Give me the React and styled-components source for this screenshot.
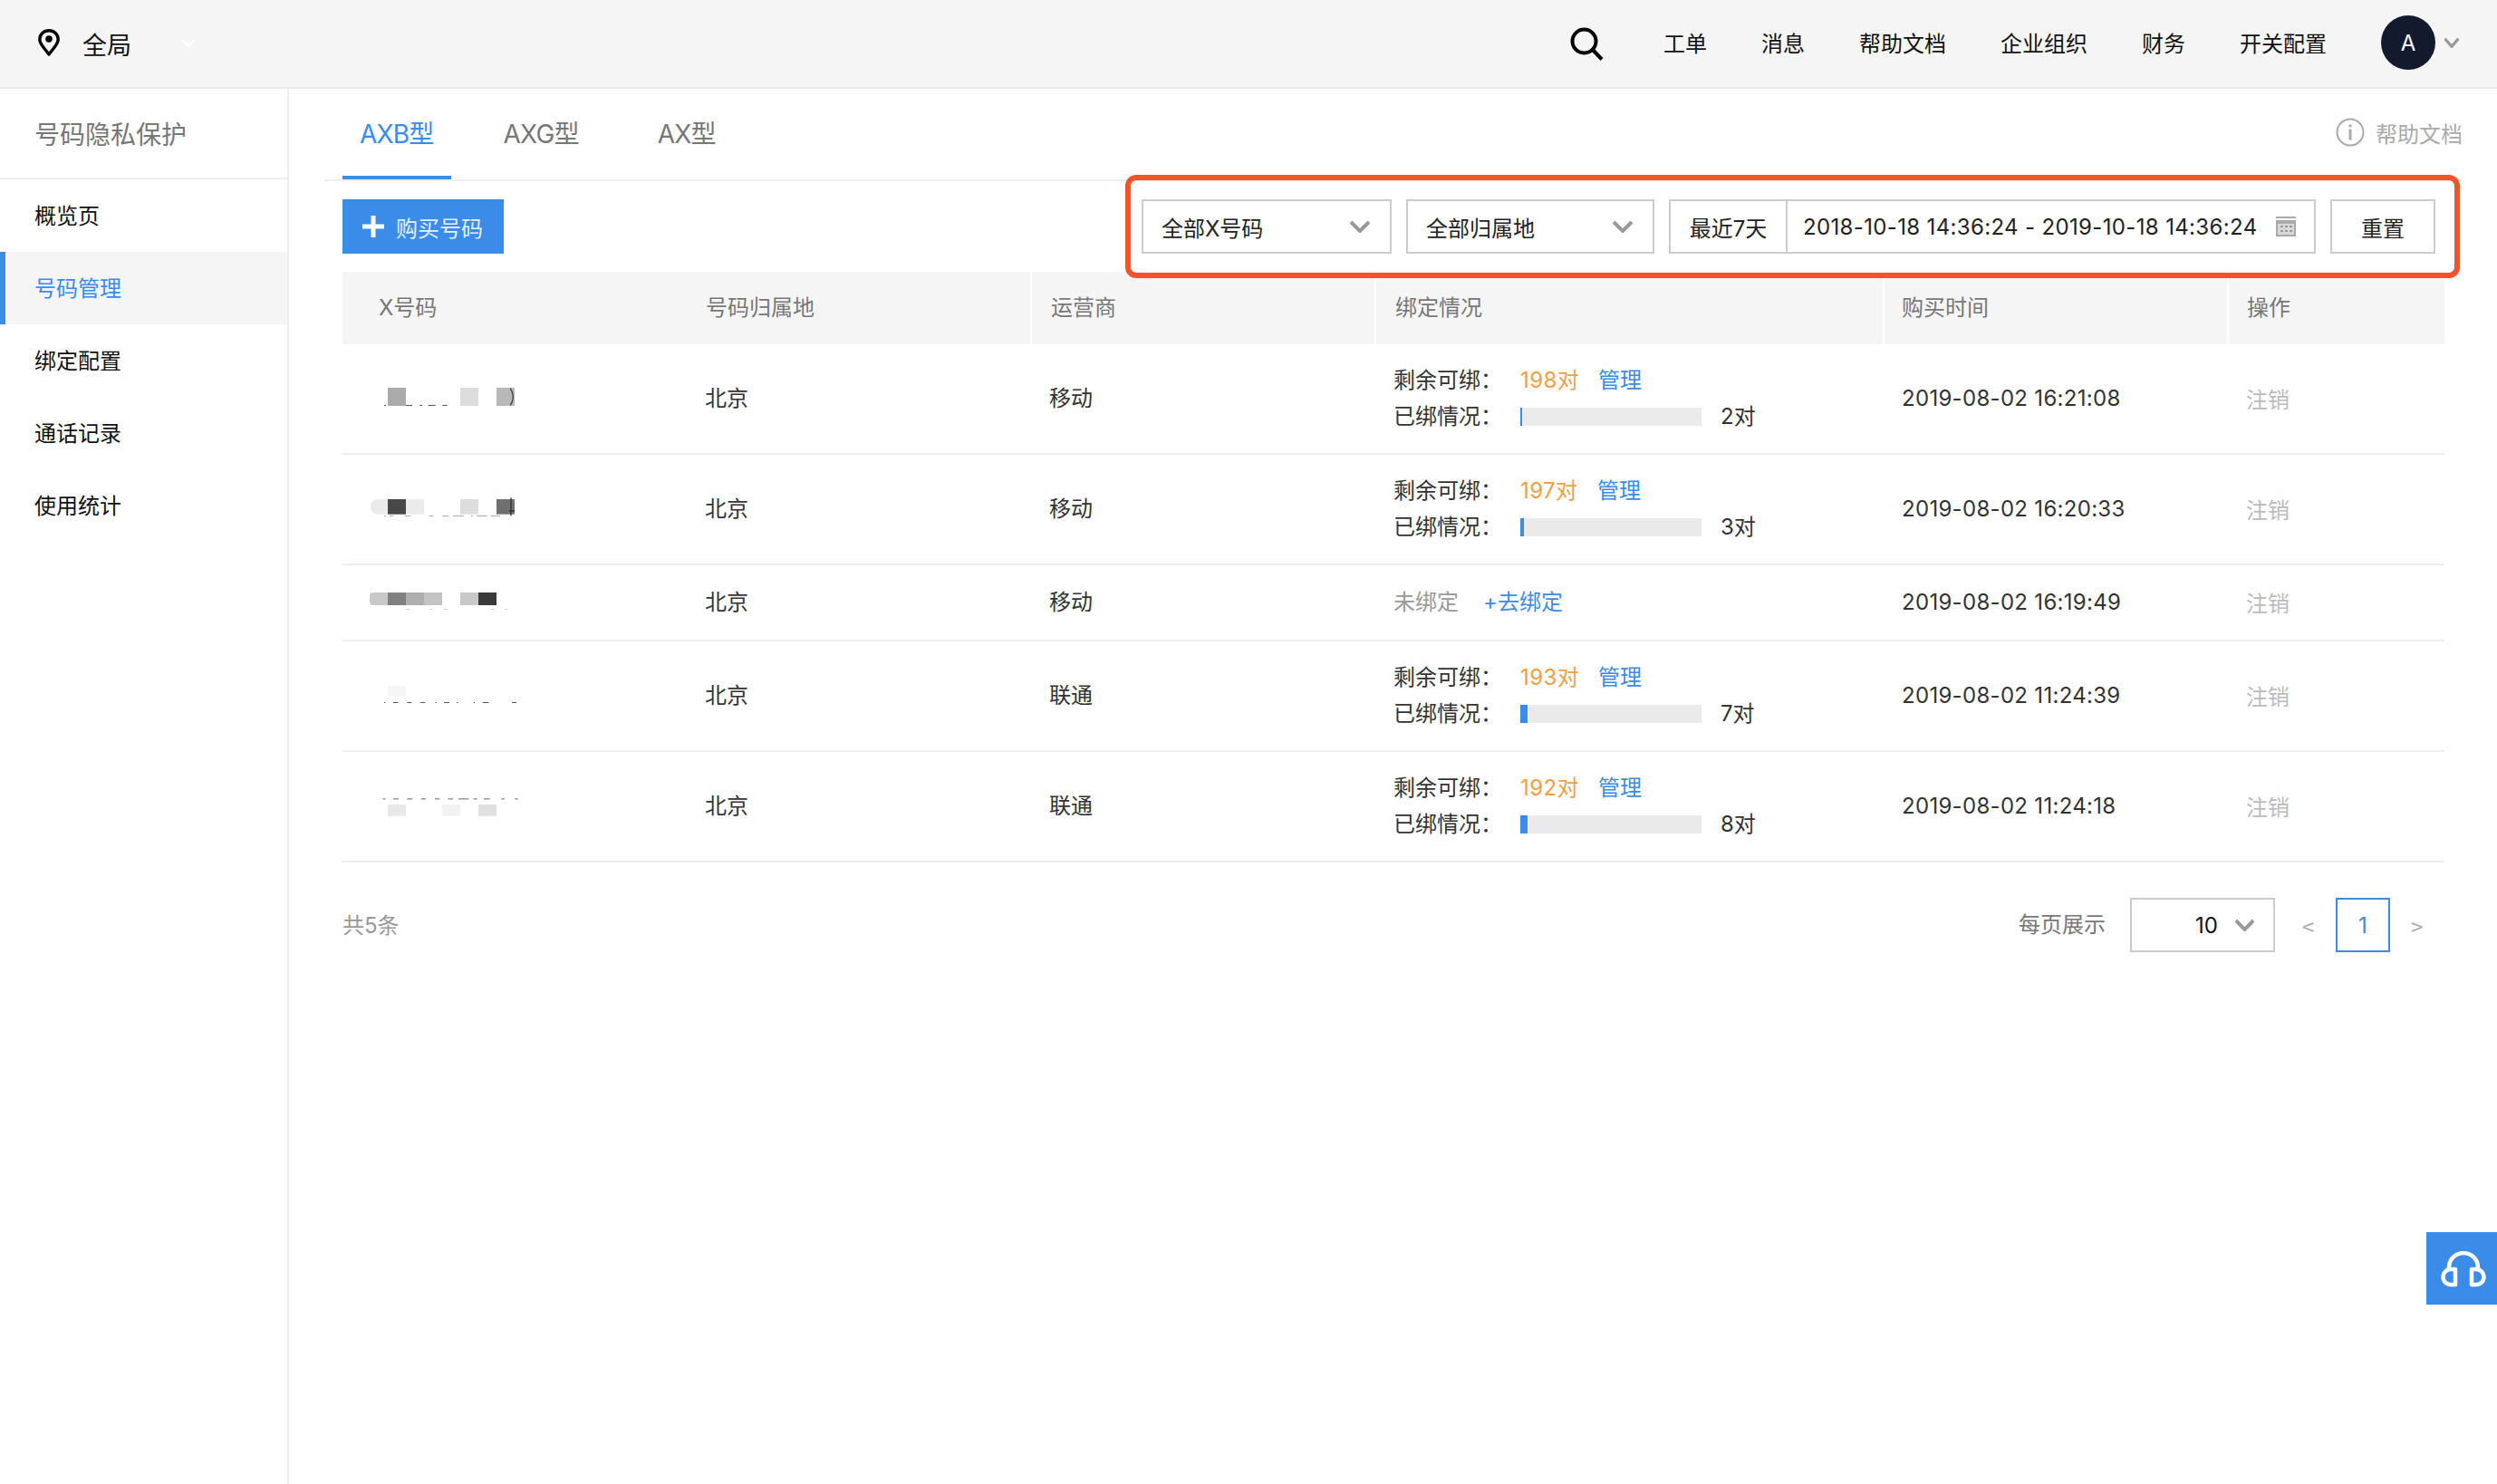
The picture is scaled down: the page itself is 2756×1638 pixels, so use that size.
import React from 'react';
import styled, { createGlobalStyle } from 'styled-components';

const BLUE = '#3a8ce8';

const GlobalStyle = createGlobalStyle`
    html, body {
        margin: 0;
        padding: 0;
        height: 100%;
        background-color: #fff;
    }
    #root {
        height: 100%;
    }
    * {
        box-sizing: border-box;
    }
    body {
        font-family: Inter, "Noto Sans CJK SC", sans-serif;
        font-size: 24px;
        color: #333;
    }
`;

const Page = styled.div`
    position: relative;
    display: flex;
    flex-direction: column;
    height: 1638px;
    overflow: hidden;
`;

const Header = styled.header`
    display: flex;
    flex: none;
    justify-content: space-between;
    align-items: center;
    height: 98px;
    padding: 0 41px 2px 42px;
    background-color: #f5f5f5;
    border-bottom: 2px solid #e9ecef;
`;

const Region = styled.div`
    display: flex;
    align-items: center;
    color: #111;
    font-size: 27px;
    & span {
        margin: 2px 55px 0 25px;
    }
`;

const TopNav = styled.nav`
    display: flex;
    align-items: center;
    gap: 60px;
    color: #111;
`;

const NavItem = styled.a`
    padding-top: 3px;
    line-height: 34px;
`;

const SearchBtn = styled.button`
    display: flex;
    margin-right: 6px;
    padding: 2px 0 0;
    border: 0;
    background: none;
`;

const UserArea = styled.div`
    display: flex;
    align-items: center;
    gap: 9px;
`;

const Avatar = styled.div`
    display: flex;
    justify-content: center;
    align-items: center;
    width: 60px;
    height: 60px;
    border-radius: 50%;
    background-color: #141a2e;
    color: #fff;
`;

const Body = styled.div`
    display: flex;
    flex: 1;
    min-height: 0;
`;

const Sidebar = styled.aside`
    flex: none;
    width: 319px;
    border-right: 2px solid #eee;
`;

const SideTitle = styled.h2`
    display: flex;
    align-items: center;
    height: 100px;
    margin: 0;
    padding-left: 38px;
    border-bottom: 2px solid #eee;
    font-size: 28px;
    font-weight: 400;
    color: #777;
`;

const SideItem = styled.a`
    display: flex;
    align-items: center;
    height: 80px;
    padding-bottom: 4px;
    padding-left: ${(p) => (p.$active ? '32px' : '38px')};
    border-left: ${(p) => (p.$active ? `6px solid ${BLUE}` : '0')};
    background-color: ${(p) => (p.$active ? '#f5f5f5' : 'transparent')};
    color: ${(p) => (p.$active ? BLUE : '#111')};
`;

const Main = styled.main`
    flex: 1;
    min-width: 0;
    padding: 0 38px 0 39px;
`;

const TabBar = styled.div`
    display: flex;
    justify-content: space-between;
    height: 102px;
    padding-left: 20px;
    border-bottom: 2px solid #eee;
`;

const Tabs = styled.div`
    display: flex;
`;

const Tab = styled.a`
    display: flex;
    align-items: center;
    height: 100px;
    margin-right: ${(p) => p.$gap}px;
    padding: 0 19px;
    border-bottom: 4px solid ${(p) => (p.$active ? BLUE : 'transparent')};
    font-size: 28px;
    letter-spacing: -0.8px;
    color: ${(p) => (p.$active ? BLUE : '#777')};
`;

const HelpLink = styled.a`
    display: flex;
    align-items: center;
    gap: 12px;
    height: 100px;
    padding-bottom: 4px;
    color: #aaa;
`;

const Content = styled.div`
    padding: 20px 20px 0;
`;

const Toolbar = styled.div`
    display: flex;
    justify-content: space-between;
    height: 60px;
`;

const BuyButton = styled.button`
    display: flex;
    align-items: center;
    gap: 13px;
    width: 178px;
    height: 60px;
    padding: 0 0 0 22px;
    border: 0;
    background-color: ${BLUE};
    color: #e4efff;
    font-family: inherit;
    font-size: 24px;
`;

const Filters = styled.div`
    display: flex;
    gap: 16px;
    margin-right: 10px;
`;

const Select = styled.div`
    display: flex;
    justify-content: space-between;
    align-items: center;
    width: ${(p) => p.$width}px;
    height: 60px;
    padding: 0 21px 0 20px;
    border: 2px solid #ccc;
    color: #222;
`;

const DateGroup = styled.div`
    display: flex;
    align-items: center;
    width: 714px;
    height: 60px;
    border: 2px solid #ccc;
    color: #222;
`;

const DatePreset = styled.div`
    display: flex;
    justify-content: center;
    align-items: center;
    flex: none;
    width: 129px;
    height: 100%;
    border-right: 2px solid #ccc;
`;

const DateRange = styled.div`
    display: flex;
    flex: 1;
    justify-content: space-between;
    align-items: center;
    padding: 0 20px 0 17px;
    letter-spacing: 0.35px;
`;

const ResetButton = styled.button`
    width: 116px;
    height: 60px;
    padding: 0;
    border: 2px solid #ccc;
    background-color: #fff;
    color: #222;
    font-family: inherit;
    font-size: 24px;
`;

const Highlight = styled.div`
    position: absolute;
    top: 193px;
    left: 1242px;
    width: 1473px;
    height: 114px;
    border: 6px solid #f4522a;
    border-radius: 12px;
    pointer-events: none;
`;

const COLUMNS = '361px 400px 380px 561px 380px 238px';

const TableHead = styled.div`
    display: grid;
    grid-template-columns: ${COLUMNS};
    height: 80px;
    margin-top: 20px;
    background-color: #f5f5f5;
    color: #777;
`;

const HeadCell = styled.div`
    display: flex;
    align-items: center;
    padding-bottom: 5px;
    padding-left: ${(p) => p.$pad}px;
    border-right: ${(p) => (p.$split ? '2px solid #fff' : '0')};
`;

const Row = styled.div`
    display: grid;
    grid-template-columns: ${COLUMNS};
    height: ${(p) => (p.$tall ? 122 : 84)}px;
    border-bottom: 2px solid #eee;
`;

const Cell = styled.div`
    display: flex;
    align-items: center;
    padding-left: ${(p) => p.$pad}px;
    color: #333;
`;

const TextCell = styled(Cell)`
    padding-bottom: 5px;
`;

const TimeCell = styled(Cell)`
    padding-bottom: 2px;
    letter-spacing: 0.3px;
`;

const CancelCell = styled(Cell)`
    padding-bottom: 1px;
    color: #bbb;
`;

const BindBlock = styled.div`
    display: grid;
    grid-template-columns: 140px auto;
    grid-auto-rows: 40px;
    align-items: center;
`;

const BindValue = styled.div`
    display: flex;
    align-items: center;
`;

const BindText = styled.span`
    padding-bottom: 5px;
`;

const Remain = styled(BindText)`
    width: ${(p) => p.$width || 86}px;
    letter-spacing: 0.4px;
    color: #f0a040;
`;

const TextLink = styled(BindText)`
    color: ${BLUE};
`;

const Unbound = styled(BindText)`
    width: 99px;
    color: #999;
`;

const Bar = styled.div`
    width: 200px;
    height: 20px;
    margin-right: 21px;
    background-color: #eaeaea;
`;

const BarFill = styled.div`
    height: 100%;
    background-color: ${BLUE};
`;

const Footer = styled.div`
    display: flex;
    justify-content: space-between;
    align-items: center;
    height: 60px;
    margin-top: 39px;
    padding-right: 24px;
`;

const Total = styled.span`
    padding-bottom: 3px;
    color: #999;
`;

const Pager = styled.div`
    display: flex;
    align-items: center;
`;

const PagerLabel = styled.span`
    margin-right: 27px;
    padding-bottom: 5px;
    color: #777;
`;

const SizeSelect = styled.div`
    display: flex;
    justify-content: flex-end;
    align-items: center;
    gap: 18px;
    width: 160px;
    height: 60px;
    margin-right: 30px;
    padding-right: 20px;
    border: 2px solid #ccc;
    color: #111;
`;

const PageArrow = styled.span`
    width: 13px;
    font-family: "Noto Sans CJK SC", sans-serif;
    color: #aaa;
`;

const PageNum = styled.span`
    display: flex;
    justify-content: center;
    align-items: center;
    width: 60px;
    height: 60px;
    margin: 0 23px 0 24px;
    border: 2px solid ${BLUE};
    color: ${BLUE};
`;

const ServiceBtn = styled.button`
    position: absolute;
    top: 1360px;
    right: 0;
    display: flex;
    justify-content: center;
    align-items: center;
    width: 78px;
    height: 80px;
    padding: 2px 0 0 3px;
    border: 0;
    background-color: ${BLUE};
`;

const MaskSvg = styled.svg`
    display: block;
`;

const Chevron = ({ color = '#999', w = 24, h = 14, sw = 4 }) => (
    <svg width={w} height={h} viewBox="0 0 24 14" fill="none" preserveAspectRatio="none">
        <path d="M2 2 L12 12 L22 2" stroke={color} strokeWidth={sw} />
    </svg>
);

const PinIcon = () => (
    <svg width="24" height="30" viewBox="0 0 24 30" fill="none">
        <path d="M12 28 C7 21 1.8 17 1.8 11.5 C1.8 5.8 6.5 1.8 12 1.8 C17.5 1.8 22.2 5.8 22.2 11.5 C22.2 17 17 21 12 28 Z" stroke="#000" strokeWidth="3.4" strokeLinejoin="round" />
        <circle cx="12" cy="11" r="3.8" fill="#000" />
    </svg>
);

const SearchIcon = () => (
    <svg width="37" height="37" viewBox="0 0 37 37" fill="none">
        <circle cx="15.5" cy="15.5" r="13" stroke="#000" strokeWidth="4" />
        <path d="M25 25 L35 35.5" stroke="#000" strokeWidth="4" />
    </svg>
);

const InfoIcon = () => (
    <svg width="32" height="32" viewBox="0 0 32 32" fill="none">
        <circle cx="16" cy="16" r="14.5" stroke="#aaa" strokeWidth="2" />
        <rect x="14.5" y="7.5" width="3" height="3" fill="#aaa" />
        <rect x="14.5" y="12.5" width="3" height="12" fill="#aaa" />
    </svg>
);

const PlusIcon = () => (
    <svg width="24" height="24" viewBox="0 0 24 24">
        <path d="M12 0 V24 M0 12 H24" stroke="#fff" strokeWidth="5" />
    </svg>
);

const CalendarIcon = () => (
    <svg width="22" height="22" viewBox="0 0 22 22">
        <rect x="0" y="0" width="22" height="2" fill="#aaa" />
        <rect x="0" y="4" width="22" height="18" fill="#aaa" />
        <rect x="2" y="8" width="18" height="12" fill="#d8d8d8" />
        <path d="M5 11 H8 M10 11 H13 M15 11 H18 M5 16 H8 M10 16 H13 M15 16 H18" stroke="#999" strokeWidth="2" />
    </svg>
);

const HeadsetIcon = () => (
    <svg width="50" height="40" viewBox="0 0 50 40" fill="none" stroke="#fff" strokeWidth="4.5">
        <path d="M9 21 V18 a16 16 0 0 1 32 0 V21" />
        <path d="M16 20 H11 a8.5 8.5 0 0 0 0 17 H16 Z" strokeLinejoin="round" />
        <path d="M34 20 H39 a8.5 8.5 0 0 1 0 17 H34 Z" strokeLinejoin="round" />
    </svg>
);

// coordinates are in 1/3 px, the blocks are the mosaic over the phone numbers
const MaskedNumber = ({ blocks, dots, dotY, dotColor, extra }) => (
    <MaskSvg width="180" height="60" viewBox="0 0 540 180">
        {dots.map(([a, b]) => (
            <rect key={a} x={a} y={dotY} width={b - a} height="3" fill={dotColor} />
        ))}
        {blocks.map(([x, y, w, h, c, r]) => (
            <rect key={x} x={x} y={y} width={w} height={h} fill={c} rx={r || 0} />
        ))}
        {extra}
    </MaskSvg>
);

const masks = [
    {
        blocks: [[84, 54, 60, 60, '#ababab'], [324, 54, 60, 60, '#dddddd'], [444, 54, 60, 60, '#b8b8b8']],
        dots: [[72, 78], [135, 165], [190, 198], [218, 242], [265, 280]],
        dotY: 111, dotColor: '#555',
        extra: <path d="M490 56 Q508 84 490 112" stroke="#444" strokeWidth="4" fill="none" />,
    },
    {
        blocks: [[27, 57, 60, 50, '#ebebeb', 24], [60, 57, 144, 50, '#ebebeb'], [84, 57, 60, 50, '#484848'], [324, 57, 60, 50, '#dddddd'], [444, 57, 60, 50, '#707070']],
        dots: [[72, 78], [90, 102], [140, 160], [222, 235], [265, 285], [300, 335], [360, 365], [380, 412], [425, 455]],
        dotY: 111, dotColor: '#aaa',
        extra: <path d="M492 52 V112 M486 96 H504" stroke="#333" strokeWidth="4" fill="none" />,
    },
    {
        blocks: [[24, 57, 60, 42, '#c8c8c8', 12], [60, 57, 24, 42, '#c8c8c8'], [84, 57, 60, 42, '#808080'], [144, 57, 60, 42, '#afafaf'], [204, 57, 60, 42, '#c4c4c4'], [324, 57, 60, 42, '#c8c8c8'], [384, 57, 60, 42, '#3a3a3a']],
        dots: [[145, 155], [225, 232], [270, 280], [425, 435], [472, 480]],
        dotY: 111, dotColor: '#ccc',
    },
    {
        blocks: [[84, 57, 60, 34, '#f6f6f6']],
        dots: [[72, 76], [102, 118], [148, 163], [192, 208], [242, 246], [270, 288], [312, 316], [368, 372], [398, 418], [495, 510]],
        dotY: 111, dotColor: '#555',
    },
    {
        blocks: [[84, 84, 60, 38, '#e8e8e8'], [264, 84, 60, 38, '#f2f2f2'], [384, 84, 60, 38, '#e0e0e0']],
        dots: [[68, 76], [102, 120], [148, 166], [194, 210], [240, 256], [284, 300], [318, 352], [368, 380], [402, 422], [460, 470], [505, 515]],
        dotY: 64, dotColor: '#666',
    },
];

const rows = [
    { carrier: '移动', left: '198对', used: '2对', fill: 2, time: '2019-08-02 16:21:08' },
    { carrier: '移动', left: '197对', used: '3对', fill: 4, leftWidth: 85, time: '2019-08-02 16:20:33' },
    { carrier: '移动', time: '2019-08-02 16:19:49' },
    { carrier: '联通', left: '193对', used: '7对', fill: 8, time: '2019-08-02 11:24:39' },
    { carrier: '联通', left: '192对', used: '8对', fill: 8, time: '2019-08-02 11:24:18' },
];

const App = () => {
    return (
        <Page>
            <GlobalStyle />
            <Header>
                <Region>
                    <PinIcon />
                    <span>全局</span>
                    <Chevron color="#fff" w={16} h={9} />
                </Region>
                <TopNav>
                    <SearchBtn><SearchIcon /></SearchBtn>
                    <NavItem>工单</NavItem>
                    <NavItem>消息</NavItem>
                    <NavItem>帮助文档</NavItem>
                    <NavItem>企业组织</NavItem>
                    <NavItem>财务</NavItem>
                    <NavItem>开关配置</NavItem>
                    <UserArea>
                        <Avatar>A</Avatar>
                        <Chevron w={18} h={12} />
                    </UserArea>
                </TopNav>
            </Header>

            <Body>
                <Sidebar>
                    <SideTitle>号码隐私保护</SideTitle>
                    <SideItem>概览页</SideItem>
                    <SideItem $active>号码管理</SideItem>
                    <SideItem>绑定配置</SideItem>
                    <SideItem>通话记录</SideItem>
                    <SideItem>使用统计</SideItem>
                </Sidebar>

                <Main>
                    <TabBar>
                        <Tabs>
                            <Tab $active $gap={39}>AXB型</Tab>
                            <Tab $gap={49}>AXG型</Tab>
                            <Tab $gap={0}>AX型</Tab>
                        </Tabs>
                        <HelpLink>
                            <InfoIcon />
                            帮助文档
                        </HelpLink>
                    </TabBar>

                    <Content>
                        <Toolbar>
                            <BuyButton>
                                <PlusIcon />
                                购买号码
                            </BuyButton>
                            <Filters>
                                <Select $width={276}>全部X号码<Chevron /></Select>
                                <Select $width={274}>全部归属地<Chevron /></Select>
                                <DateGroup>
                                    <DatePreset>最近7天</DatePreset>
                                    <DateRange>
                                        2018-10-18 14:36:24 - 2019-10-18 14:36:24
                                        <CalendarIcon />
                                    </DateRange>
                                </DateGroup>
                                <ResetButton>重置</ResetButton>
                            </Filters>
                        </Toolbar>

                        <TableHead>
                            <HeadCell $pad={40}>X号码</HeadCell>
                            <HeadCell $pad={40} $split>号码归属地</HeadCell>
                            <HeadCell $pad={21} $split>运营商</HeadCell>
                            <HeadCell $pad={21} $split>绑定情况</HeadCell>
                            <HeadCell $pad={19} $split>购买时间</HeadCell>
                            <HeadCell $pad={20}>操作</HeadCell>
                        </TableHead>

                        {rows.map((row, i) => (
                            <Row key={row.time} $tall={!!row.left}>
                                <Cell $pad={22}><MaskedNumber {...masks[i]} /></Cell>
                                <TextCell $pad={39}>北京</TextCell>
                                <TextCell $pad={19}>{row.carrier}</TextCell>
                                <Cell $pad={19}>
                                    {row.left ? (
                                        <BindBlock>
                                            <BindText>剩余可绑：</BindText>
                                            <BindValue>
                                                <Remain $width={row.leftWidth}>{row.left}</Remain>
                                                <TextLink>管理</TextLink>
                                            </BindValue>
                                            <BindText>已绑情况：</BindText>
                                            <BindValue>
                                                <Bar><BarFill style={{ width: row.fill }} /></Bar>
                                                <BindText>{row.used}</BindText>
                                            </BindValue>
                                        </BindBlock>
                                    ) : (
                                        <>
                                            <Unbound>未绑定</Unbound>
                                            <TextLink>+去绑定</TextLink>
                                        </>
                                    )}
                                </Cell>
                                <TimeCell $pad={19}>{row.time}</TimeCell>
                                <CancelCell $pad={19}>注销</CancelCell>
                            </Row>
                        ))}

                        <Footer>
                            <Total>共5条</Total>
                            <Pager>
                                <PagerLabel>每页展示</PagerLabel>
                                <SizeSelect>10<Chevron w={23} h={14} /></SizeSelect>
                                <PageArrow>&lt;</PageArrow>
                                <PageNum>1</PageNum>
                                <PageArrow>&gt;</PageArrow>
                            </Pager>
                        </Footer>
                    </Content>
                </Main>
            </Body>

            <Highlight />
            <ServiceBtn><HeadsetIcon /></ServiceBtn>
        </Page>
    );
};

export default App;
